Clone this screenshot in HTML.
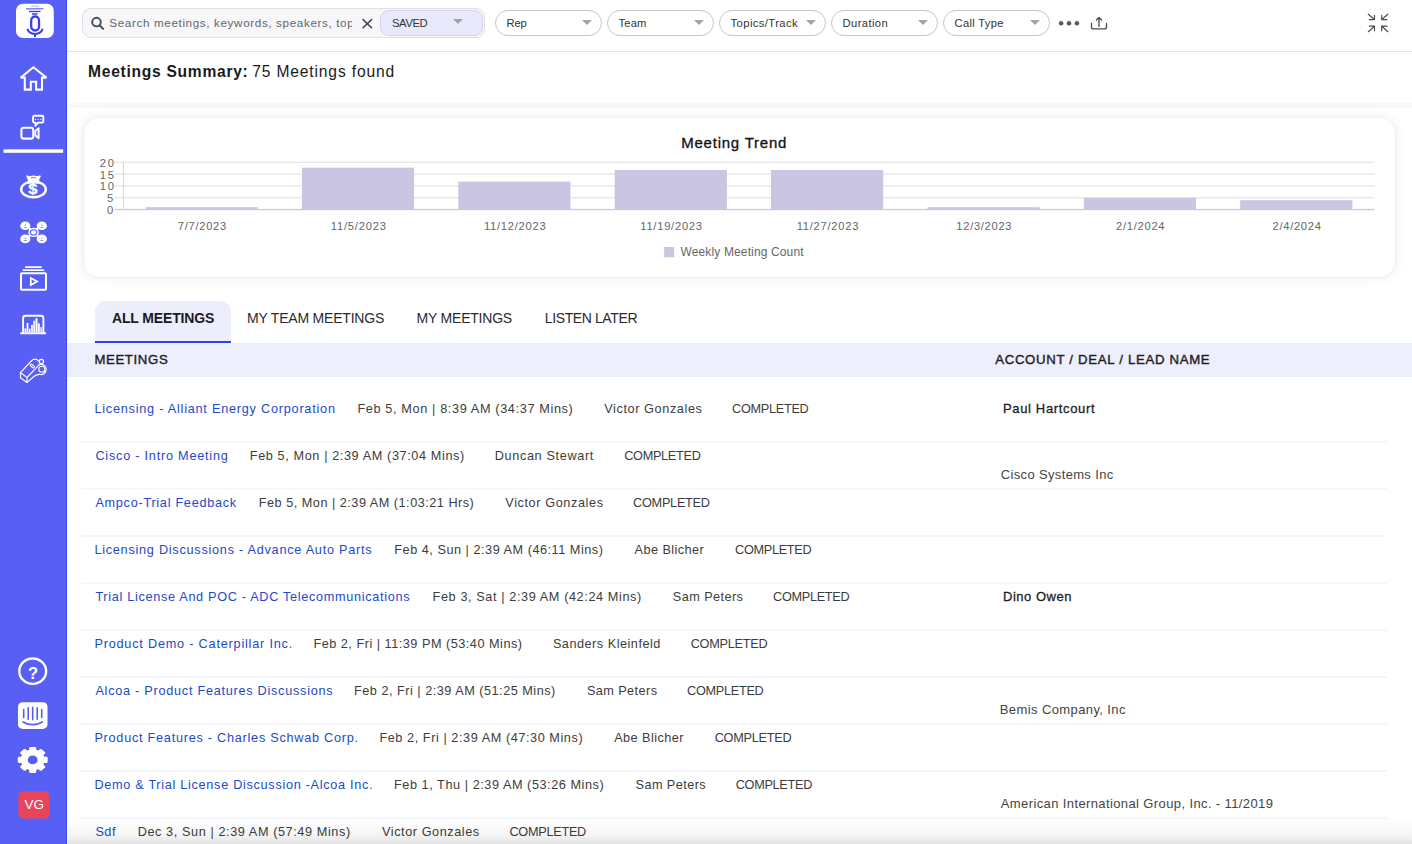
<!DOCTYPE html>
<html lang="en">
<head>
<meta charset="utf-8">
<title>Meetings</title>
<style>
*{box-sizing:border-box;margin:0;padding:0}
html,body{width:1412px;height:844px;overflow:hidden;background:#fff}
body{font-family:"Liberation Sans",Arial,sans-serif;color:#222;position:relative}
.abs{position:absolute}
#side{position:absolute;left:0;top:0;width:66.600px;height:844px;background:#585ff5;border-right:1.500px solid #3c46f7}
#top{position:absolute;left:66.500px;top:0;right:0;height:51.500px;border-bottom:1.500px solid #e6e6e8;background:#fff}
.t{position:absolute;white-space:nowrap;line-height:16px}
#search{position:absolute;left:82px;top:8px;width:402.500px;height:30px;border:1px solid #e0e0e4;border-radius:9px;background:#f7f7f9}
#saved{position:absolute;left:380px;top:10px;width:102.500px;height:25.500px;border:1px solid #d2d3ec;border-radius:9px;background:#e8e9fb}
.pill{position:absolute;top:10px;width:106.500px;height:26px;border:1px solid #c6c6ca;border-radius:13px;background:#fff}
.caret{position:absolute;width:0;height:0;border-left:5.100px solid transparent;border-right:5.100px solid transparent;border-top:5.700px solid #a1a1a9}
.sep{position:absolute;left:79px;width:1308px;height:2px;background:#f5f5fc}
#card{position:absolute;left:83.500px;top:117.500px;width:1311.500px;height:159px;border-radius:15px;background:#fff;box-shadow:0 0 0 1px rgba(0,0,0,.025),0 0 12px rgba(0,0,0,.085)}
#thead{position:absolute;left:66.500px;top:342.500px;width:1346px;height:34.500px;background:#eeeffd}
#tab{position:absolute;left:95px;top:301px;width:136px;height:41.500px;background:#eceefc;border-radius:11px 11px 0 0;border-bottom:2.800px solid #2c42ec}
</style>
</head>
<body>
<div id="side">
<svg width="67" height="844" viewBox="0 0 67 844" style="position:absolute;left:0;top:0" fill="none" stroke="#fff" stroke-width="2" stroke-linecap="round" stroke-linejoin="round">
<!-- logo -->
<rect x="16" y="3.800" width="37.800" height="34.200" rx="7" fill="#fff" stroke="none"/>
<g stroke="#3a3eee" stroke-width="1.300" stroke-linecap="butt">
<path d="M31 6.200H39" stroke-opacity=".3"/><path d="M26 8.800H43.500" stroke-opacity=".75"/><path d="M29 11.500H40.500"/><path d="M32 14H37.500" stroke-width="1.500"/>
<rect x="31.200" y="16.500" width="7.800" height="14" rx="3.900" stroke-width="2.300"/>
<path d="M27.600 28.800a7.400 5.200 0 0 0 14.800 0" stroke-width="2.100"/><path d="M35 34V36.900" stroke-width="2"/>
</g>
<!-- home -->
<path d="M20.700 77.600L33.400 67.300 46.400 77.600H42V89.600H36.100V81.800H30.800V89.600H24.800V77.600Z" stroke-width="2.050" stroke-linejoin="miter" stroke-miterlimit="2"/>
<!-- camera + chat -->
<rect x="21.400" y="127.800" width="11.900" height="10.800" rx="2.300" stroke-width="2.100"/>
<path d="M35.300 131.100L38.600 128.200v10l-3.300-2.900z" stroke-width="1.900"/>
<path d="M34.400 115.700h7.600a1.300 1.300 0 0 1 1.300 1.300v4.300a1.300 1.300 0 0 1-1.300 1.300h-4l-2.600 3.200v-3.200h-1a1.300 1.300 0 0 1-1.300-1.300v-4.300a1.300 1.300 0 0 1 1.300-1.300z" stroke-width="1.900"/>
<path d="M35.500 119.300h.1M38.100 119.300h.1M40.700 119.300h.1" stroke-width="1.300"/>
<!-- active underline -->
<rect x="3.500" y="149.300" width="59.600" height="3.500" fill="#fff" stroke="none"/>
<!-- money bag -->
<ellipse cx="33.500" cy="189.400" rx="12.300" ry="7.900" stroke-width="2.400"/>
<path d="M27.200 176.200c1.200.6 2.300.8 3.400.5 2-.6 3.800-.6 5.800 0 1.100.3 2.200.1 3.400-.5-.2.900-.8 2-1.500 3.200l.6 3.400h-10.800l.6-3.400c-.7-1.200-1.300-2.300-1.500-3.200z" fill="#fff" stroke-width="1.700"/>
<path d="M31.400 177.900c1.300-.5 2.900-.5 4.200 0" stroke="#585ff5" stroke-width="1" />
<!-- network -->
<g fill="#fff" stroke="none">
<ellipse cx="25.300" cy="225.700" rx="5.100" ry="4.300"/><ellipse cx="41.800" cy="225.700" rx="5.100" ry="4.300"/><ellipse cx="25.300" cy="238.900" rx="5.100" ry="4.300"/><ellipse cx="41.800" cy="238.900" rx="5.100" ry="4.300"/><ellipse cx="33.600" cy="232.400" rx="5.300" ry="4.600"/>
<path d="M28 227.500l3 2.400M39 227.500l-3 2.400M28 237.100l3-2.400M39 237.100l-3-2.400" stroke="#fff" stroke-width="2.200"/>
</g>
<g fill="#585ff5" stroke="none" opacity=".75">
<circle cx="25.300" cy="225.300" r=".7"/><ellipse cx="25.300" cy="227.500" rx="1.600" ry=".6"/>
<circle cx="41.800" cy="225.300" r=".7"/><ellipse cx="41.800" cy="227.500" rx="1.600" ry=".6"/>
<circle cx="25.300" cy="238.400" r=".7"/><ellipse cx="25.300" cy="240.600" rx="1.600" ry=".6"/>
<circle cx="41.800" cy="238.400" r=".7"/><ellipse cx="41.800" cy="240.600" rx="1.600" ry=".6"/>
</g>
<ellipse cx="33.600" cy="232.400" rx="3.200" ry="2.600" stroke="#585ff5" stroke-width="1.100"/><ellipse cx="33.600" cy="232.400" rx="1.500" ry="1.100" fill="#fff" stroke="none" opacity=".7"/>
<!-- video stack -->
<rect x="21" y="273.200" width="25" height="16.500" rx=".9" stroke-width="2"/>
<path d="M23.400 270.200H43.400M25.800 267.200H41" stroke-width="1.800"/>
<path d="M30.800 278.100l6.300 3.500-6.300 3.500z" stroke-width="1.700" stroke-linejoin="miter"/>
<!-- chart -->
<path d="M23.100 332.600V318.200a2.500 2.500 0 0 1 2.500-2.500h15.300a2.500 2.500 0 0 1 2.500 2.500v14.400" stroke-width="1.900"/>
<path d="M20.900 333.200H45.300" stroke-width="1.900"/>
<g fill="#fff" stroke="none">
<rect x="24.500" y="328.400" width="1.700" height="4"/><rect x="26.600" y="323" width="1.800" height="9.400"/><rect x="28.900" y="328.600" width="1.600" height="3.800"/><rect x="31" y="324.800" width="2" height="7.600" opacity=".85"/><rect x="33.200" y="320.700" width="1.900" height="11.700" opacity=".9"/><rect x="35.500" y="318.200" width="2" height="14.200"/><rect x="37.900" y="323.300" width="1.900" height="9.100"/><rect x="40.200" y="327.100" width="2" height="5.300" opacity=".75"/>
</g>
<!-- whistle -->
<g stroke-width="1.150">
<path d="M20.500 372.600L31.800 360.500C33.200 359.100 35.500 358.800 37.100 359.800L39.500 361.600"/>
<path d="M27 377.500L39 364.800"/>
<path d="M20.500 372.600L27 377.500V382.500L20.500 377.800Z"/>
<path d="M27 382.500L34.200 376.200C36 374.700 37.800 374.600 39.600 374.300"/>
<path d="M39 364.800A5.100 5.100 0 1 1 39.600 374.300"/>
<circle cx="41.800" cy="369.200" r="3"/>
<circle cx="41.300" cy="361.500" r="2.200"/>
<rect x="30.100" y="365.100" width="4.600" height="2" rx="1" transform="rotate(38 32.400 366.100)"/>
</g>
<!-- help -->
<ellipse cx="32.700" cy="671.200" rx="13.400" ry="12.700" stroke-width="2.400"/>
<!-- intercom -->
<rect x="18" y="702.200" width="29.500" height="26.700" rx="4.500" fill="#fff" stroke="none"/>
<g stroke="#585ff5" stroke-width="1.600" stroke-linecap="round"><path d="M23.700 709.500v8M28.200 707.700v11.500M32.700 707.200v12.500M37.200 707.700v11.500M41.700 709.500v8"/><path d="M23.200 722c5.500 3.600 13.500 3.600 19 0" stroke-width="1.700"/></g>
<!-- gear -->
<g transform="translate(32.700 759.900) scale(1.150 1)" fill="#fff" stroke="none">
<circle r="10.400"/>
<rect x="-3.100" y="-13" width="6.200" height="26" rx="1.200"/><rect x="-3.100" y="-13" width="6.200" height="26" rx="1.200" transform="rotate(45)"/><rect x="-3.100" y="-13" width="6.200" height="26" rx="1.200" transform="rotate(90)"/><rect x="-3.100" y="-13" width="6.200" height="26" rx="1.200" transform="rotate(135)"/>
<circle r="4.300" fill="#585ff5"/>
</g>
<!-- avatar -->
<rect x="18.400" y="791.200" width="31" height="27.400" rx="4.500" fill="#e8445a" stroke="none"/>
</svg>

<div class="t" style="left:29.200px;top:179.900px;font-size:14px;font-weight:bold;color:#fff;line-height:19px;-webkit-text-stroke:.3px #fff;transform:scaleX(1.180);transform-origin:50% 50%">$</div>
<div class="t" style="left:28px;top:661.500px;font-size:16.500px;font-weight:bold;color:#fff;line-height:22px">?</div>
<div class="t" style="left:24.60px;top:797.00px;font-size:13.5px;line-height:16px;color:#fff;letter-spacing:-0.204px;">VG</div>
</div>
<div id="top"></div>
<div id="search"></div>
<svg class="abs" style="left:88px;top:14px" width="20" height="20" viewBox="0 0 20 20" fill="none" stroke="#4a4a4e" stroke-width="1.900" stroke-linecap="round"><circle cx="8.500" cy="8.100" r="4.300"/><path d="M11.800 11.500l3.400 3.400"/></svg>
<div class="abs" style="left:100px;top:10px;width:251.500px;height:26px;overflow:hidden"><div class="t" style="left:9.30px;top:5.20px;font-size:11.7px;line-height:16px;color:#66666a;letter-spacing:0.620px;">Search meetings, keywords, speakers, topics</div></div>
<svg class="abs" style="left:361px;top:17px" width="13" height="13" viewBox="0 0 13 13" fill="none" stroke="#444448" stroke-width="1.500" stroke-linecap="round"><path d="M2 2.600l8.600 8.200M10.600 2.600L2 10.800"/></svg>
<div id="saved"><div class="caret" style="left:72.400px;top:8.200px"></div></div>
<div class="t" style="left:392.00px;top:15.20px;font-size:11.2px;line-height:16px;color:#333;letter-spacing:-0.354px;">SAVED</div>
<div class="pill" style="left:495px"><div class="caret" style="left:86.100px;top:9px"></div></div>
<div class="t" style="left:506.60px;top:15.20px;font-size:11.2px;line-height:16px;color:#333;letter-spacing:-0.251px;">Rep</div>
<div class="pill" style="left:607px"><div class="caret" style="left:86.100px;top:9px"></div></div>
<div class="t" style="left:618.60px;top:15.20px;font-size:11.2px;line-height:16px;color:#333;letter-spacing:0.121px;">Team</div>
<div class="pill" style="left:719px"><div class="caret" style="left:86.100px;top:9px"></div></div>
<div class="t" style="left:730.60px;top:15.20px;font-size:11.2px;line-height:16px;color:#333;letter-spacing:0.420px;">Topics/Track</div>
<div class="pill" style="left:831px"><div class="caret" style="left:86.100px;top:9px"></div></div>
<div class="t" style="left:842.60px;top:15.20px;font-size:11.2px;line-height:16px;color:#333;letter-spacing:0.405px;">Duration</div>
<div class="pill" style="left:943px"><div class="caret" style="left:86.100px;top:9px"></div></div>
<div class="t" style="left:954.60px;top:15.20px;font-size:11.2px;line-height:16px;color:#333;letter-spacing:0.311px;">Call Type</div>
<svg class="abs" style="left:1055px;top:10px" width="60" height="26" viewBox="0 0 60 26" fill="none" stroke="#4c4c52" stroke-width="1.300" stroke-linecap="round" stroke-linejoin="round">
<g fill="#5a5a60" stroke="none"><circle cx="6.100" cy="13.200" r="2.300"/><circle cx="14" cy="13.200" r="2.300"/><circle cx="21.900" cy="13.200" r="2.300"/></g>
<path d="M36.500 13.300v3.600a2 2 0 0 0 2 2h11a2 2 0 0 0 2-2v-3.600"/><path d="M44 16.400V7.700M41.400 10l2.600-2.500 2.600 2.500"/>
</svg>
<svg class="abs" style="left:1365px;top:11px" width="26" height="24" viewBox="0 0 26 24" fill="none" stroke="#4c4c52" stroke-width="1.150" stroke-linecap="round" stroke-linejoin="round">
<path d="M3.300 3.200l6.200 5.300M9.500 4.200v4.400H4.200M22.900 3.200l-6.200 5.300M16.700 4.200v4.400H22M3.300 20.700l6.200-5.500M4.200 15.100h5.300v4.600M22.900 20.700l-6.200-5.500M22 15.100h-5.300v4.600"/>
</svg>
<div class="t" style="left:88.10px;top:63.30px;font-size:15.6px;line-height:18px;color:#1a1a1a;letter-spacing:0.720px;font-weight:700;">Meetings Summary:</div>
<div class="t" style="left:252.20px;top:63.30px;font-size:15.6px;line-height:18px;color:#1a1a1a;letter-spacing:0.854px;">75 Meetings found</div>
<div class="abs" style="left:68px;top:103px;width:1344px;height:5px;background:#f8f8f8"></div>
<div id="card"></div>
<div class="t" style="left:681.20px;top:134.30px;font-size:15px;line-height:18px;color:#111;letter-spacing:0.774px;-webkit-text-stroke:.3px #111;">Meeting Trend</div>
<svg class="abs" style="left:83px;top:117px" width="1312" height="160" viewBox="83 117 1312 160"><rect x="114.500" y="161.7" width="1260" height="1.200" fill="#e4e4e4"/><rect x="114.500" y="173.5" width="1260" height="1.200" fill="#e4e4e4"/><rect x="114.500" y="185.3" width="1260" height="1.200" fill="#e4e4e4"/><rect x="114.500" y="197.1" width="1260" height="1.200" fill="#e4e4e4"/><rect x="114.500" y="208.900" width="1260" height="1.300" fill="#cbcbcb"/><rect x="122.900" y="162" width="1.100" height="47.500" fill="#dadada"/><rect x="145.5" y="207.2" width="112.2" height="2.3" fill="#c9c5e2"/><rect x="301.9" y="167.7" width="112.2" height="41.8" fill="#c9c5e2"/><rect x="458.3" y="181.6" width="112.2" height="27.9" fill="#c9c5e2"/><rect x="614.7" y="170.0" width="112.2" height="39.5" fill="#c9c5e2"/><rect x="771.0" y="170.0" width="112.2" height="39.5" fill="#c9c5e2"/><rect x="927.4" y="207.2" width="112.2" height="2.3" fill="#c9c5e2"/><rect x="1083.8" y="197.9" width="112.2" height="11.6" fill="#c9c5e2"/><rect x="1240.2" y="200.2" width="112.2" height="9.3" fill="#c9c5e2"/><rect x="664.200" y="247" width="10" height="10.300" fill="#c9c5e2"/></svg>
<div class="t" style="left:99.70px;top:154.80px;font-size:11.2px;line-height:16px;color:#666;letter-spacing:1.778px;">20</div>
<div class="t" style="left:99.70px;top:166.50px;font-size:11.2px;line-height:16px;color:#666;letter-spacing:1.778px;">15</div>
<div class="t" style="left:99.70px;top:178.20px;font-size:11.2px;line-height:16px;color:#666;letter-spacing:1.778px;">10</div>
<div class="t" style="left:107.10px;top:189.90px;font-size:11.2px;line-height:16px;color:#666;letter-spacing:0.000px;">5</div>
<div class="t" style="left:107.10px;top:201.60px;font-size:11.2px;line-height:16px;color:#666;letter-spacing:0.000px;">0</div>
<div class="t" style="left:177.79px;top:217.50px;font-size:11.2px;line-height:16px;color:#666;letter-spacing:0.696px;">7/7/2023</div>
<div class="t" style="left:330.78px;top:217.50px;font-size:11.2px;line-height:16px;color:#666;letter-spacing:0.785px;">11/5/2023</div>
<div class="t" style="left:483.92px;top:217.50px;font-size:11.2px;line-height:16px;color:#666;letter-spacing:0.729px;">11/12/2023</div>
<div class="t" style="left:640.31px;top:217.50px;font-size:11.2px;line-height:16px;color:#666;letter-spacing:0.729px;">11/19/2023</div>
<div class="t" style="left:796.69px;top:217.50px;font-size:11.2px;line-height:16px;color:#666;letter-spacing:0.729px;">11/27/2023</div>
<div class="t" style="left:956.33px;top:217.50px;font-size:11.2px;line-height:16px;color:#666;letter-spacing:0.681px;">12/3/2023</div>
<div class="t" style="left:1116.12px;top:217.50px;font-size:11.2px;line-height:16px;color:#666;letter-spacing:0.696px;">2/1/2024</div>
<div class="t" style="left:1272.51px;top:217.50px;font-size:11.2px;line-height:16px;color:#666;letter-spacing:0.696px;">2/4/2024</div>
<div class="t" style="left:680.50px;top:244.10px;font-size:12px;line-height:16px;color:#666;letter-spacing:0.133px;">Weekly Meeting Count</div>
<div id="tab"></div><div id="thead"></div>
<div class="t" style="left:112.00px;top:310.30px;font-size:14px;line-height:16px;color:#1a1a1e;letter-spacing:-0.144px;font-weight:700;">ALL MEETINGS</div>
<div class="t" style="left:247.10px;top:310.30px;font-size:14px;line-height:16px;color:#2a2a2e;letter-spacing:-0.210px;">MY TEAM MEETINGS</div>
<div class="t" style="left:416.60px;top:310.30px;font-size:14px;line-height:16px;color:#2a2a2e;letter-spacing:-0.217px;">MY MEETINGS</div>
<div class="t" style="left:544.80px;top:310.30px;font-size:14px;line-height:16px;color:#2a2a2e;letter-spacing:-0.389px;">LISTEN LATER</div>
<div class="t" style="left:94.40px;top:352.30px;font-size:13.2px;line-height:16px;color:#1e1e28;letter-spacing:0.632px;-webkit-text-stroke:.4px #1e1e28;">MEETINGS</div>
<div class="t" style="left:995.20px;top:352.30px;font-size:13.2px;line-height:16px;color:#1e1e28;letter-spacing:0.694px;-webkit-text-stroke:.4px #1e1e28;">ACCOUNT / DEAL / LEAD NAME</div>
<div class="t" style="left:94.40px;top:401.40px;font-size:12.7px;line-height:16px;color:#1c4ac8;letter-spacing:0.764px;">Licensing - Alliant Energy Corporation</div>
<div class="t" style="left:357.40px;top:401.40px;font-size:12.7px;line-height:16px;color:#3c3c3c;letter-spacing:0.635px;">Feb 5, Mon | 8:39 AM (34:37 Mins)</div>
<div class="t" style="left:604.20px;top:401.40px;font-size:12.7px;line-height:16px;color:#3c3c3c;letter-spacing:0.601px;">Victor Gonzales</div>
<div class="t" style="left:732.00px;top:401.40px;font-size:12.7px;line-height:16px;color:#3c3c3c;letter-spacing:-0.274px;">COMPLETED</div>
<div class="t" style="left:1003.00px;top:401.40px;font-size:13px;line-height:16px;color:#1c1c1c;letter-spacing:0.648px;-webkit-text-stroke:.28px #1c1c1c;">Paul Hartcourt</div>
<div class="sep" style="top:441.0px"></div>
<div class="t" style="left:95.40px;top:448.40px;font-size:12.7px;line-height:16px;color:#1c4ac8;letter-spacing:0.770px;">Cisco - Intro Meeting</div>
<div class="t" style="left:249.80px;top:448.40px;font-size:12.7px;line-height:16px;color:#3c3c3c;letter-spacing:0.604px;">Feb 5, Mon | 2:39 AM (37:04 Mins)</div>
<div class="t" style="left:494.70px;top:448.40px;font-size:12.7px;line-height:16px;color:#3c3c3c;letter-spacing:0.643px;">Duncan Stewart</div>
<div class="t" style="left:624.20px;top:448.40px;font-size:12.7px;line-height:16px;color:#3c3c3c;letter-spacing:-0.287px;">COMPLETED</div>
<div class="t" style="left:1000.80px;top:466.90px;font-size:13px;line-height:16px;color:#444;letter-spacing:0.343px;">Cisco Systems Inc</div>
<div class="sep" style="top:488.0px"></div>
<div class="t" style="left:95.40px;top:495.40px;font-size:12.7px;line-height:16px;color:#1c4ac8;letter-spacing:0.715px;">Ampco-Trial Feedback</div>
<div class="t" style="left:258.80px;top:495.40px;font-size:12.7px;line-height:16px;color:#3c3c3c;letter-spacing:0.497px;">Feb 5, Mon | 2:39 AM (1:03:21 Hrs)</div>
<div class="t" style="left:505.30px;top:495.40px;font-size:12.7px;line-height:16px;color:#3c3c3c;letter-spacing:0.601px;">Victor Gonzales</div>
<div class="t" style="left:633.10px;top:495.40px;font-size:12.7px;line-height:16px;color:#3c3c3c;letter-spacing:-0.262px;">COMPLETED</div>
<div class="sep" style="top:535.0px"></div>
<div class="t" style="left:94.40px;top:542.40px;font-size:12.7px;line-height:16px;color:#1c4ac8;letter-spacing:0.739px;">Licensing Discussions - Advance Auto Parts</div>
<div class="t" style="left:394.30px;top:542.40px;font-size:12.7px;line-height:16px;color:#3c3c3c;letter-spacing:0.518px;">Feb 4, Sun | 2:39 AM (46:11 Mins)</div>
<div class="t" style="left:634.50px;top:542.40px;font-size:12.7px;line-height:16px;color:#3c3c3c;letter-spacing:0.444px;">Abe Blicher</div>
<div class="t" style="left:735.00px;top:542.40px;font-size:12.7px;line-height:16px;color:#3c3c3c;letter-spacing:-0.287px;">COMPLETED</div>
<div class="sep" style="top:582.0px"></div>
<div class="t" style="left:95.40px;top:589.40px;font-size:12.7px;line-height:16px;color:#1c4ac8;letter-spacing:0.683px;">Trial License And POC - ADC Telecommunications</div>
<div class="t" style="left:432.60px;top:589.40px;font-size:12.7px;line-height:16px;color:#3c3c3c;letter-spacing:0.599px;">Feb 3, Sat | 2:39 AM (42:24 Mins)</div>
<div class="t" style="left:672.80px;top:589.40px;font-size:12.7px;line-height:16px;color:#3c3c3c;letter-spacing:0.429px;">Sam Peters</div>
<div class="t" style="left:773.00px;top:589.40px;font-size:12.7px;line-height:16px;color:#3c3c3c;letter-spacing:-0.287px;">COMPLETED</div>
<div class="t" style="left:1003.00px;top:589.40px;font-size:13px;line-height:16px;color:#1c1c1c;letter-spacing:0.515px;-webkit-text-stroke:.28px #1c1c1c;">Dino Owen</div>
<div class="sep" style="top:629.0px"></div>
<div class="t" style="left:94.40px;top:636.40px;font-size:12.7px;line-height:16px;color:#1c4ac8;letter-spacing:0.789px;">Product Demo - Caterpillar Inc.</div>
<div class="t" style="left:313.40px;top:636.40px;font-size:12.7px;line-height:16px;color:#3c3c3c;letter-spacing:0.503px;">Feb 2, Fri | 11:39 PM (53:40 Mins)</div>
<div class="t" style="left:552.90px;top:636.40px;font-size:12.7px;line-height:16px;color:#3c3c3c;letter-spacing:0.500px;">Sanders Kleinfeld</div>
<div class="t" style="left:690.70px;top:636.40px;font-size:12.7px;line-height:16px;color:#3c3c3c;letter-spacing:-0.262px;">COMPLETED</div>
<div class="sep" style="top:676.0px"></div>
<div class="t" style="left:95.40px;top:683.40px;font-size:12.7px;line-height:16px;color:#1c4ac8;letter-spacing:0.734px;">Alcoa - Product Features Discussions</div>
<div class="t" style="left:354.00px;top:683.40px;font-size:12.7px;line-height:16px;color:#3c3c3c;letter-spacing:0.503px;">Feb 2, Fri | 2:39 AM (51:25 Mins)</div>
<div class="t" style="left:586.90px;top:683.40px;font-size:12.7px;line-height:16px;color:#3c3c3c;letter-spacing:0.429px;">Sam Peters</div>
<div class="t" style="left:687.10px;top:683.40px;font-size:12.7px;line-height:16px;color:#3c3c3c;letter-spacing:-0.287px;">COMPLETED</div>
<div class="t" style="left:999.80px;top:701.90px;font-size:13px;line-height:16px;color:#444;letter-spacing:0.396px;">Bemis Company, Inc</div>
<div class="sep" style="top:723.0px"></div>
<div class="t" style="left:94.40px;top:730.40px;font-size:12.7px;line-height:16px;color:#1c4ac8;letter-spacing:0.742px;">Product Features - Charles Schwab Corp.</div>
<div class="t" style="left:379.40px;top:730.40px;font-size:12.7px;line-height:16px;color:#3c3c3c;letter-spacing:0.563px;">Feb 2, Fri | 2:39 AM (47:30 Mins)</div>
<div class="t" style="left:614.20px;top:730.40px;font-size:12.7px;line-height:16px;color:#3c3c3c;letter-spacing:0.444px;">Abe Blicher</div>
<div class="t" style="left:714.70px;top:730.40px;font-size:12.7px;line-height:16px;color:#3c3c3c;letter-spacing:-0.262px;">COMPLETED</div>
<div class="sep" style="top:770.0px"></div>
<div class="t" style="left:94.40px;top:777.40px;font-size:12.7px;line-height:16px;color:#1c4ac8;letter-spacing:0.697px;">Demo &amp; Trial License Discussion -Alcoa Inc.</div>
<div class="t" style="left:394.00px;top:777.40px;font-size:12.7px;line-height:16px;color:#3c3c3c;letter-spacing:0.551px;">Feb 1, Thu | 2:39 AM (53:26 Mins)</div>
<div class="t" style="left:635.50px;top:777.40px;font-size:12.7px;line-height:16px;color:#3c3c3c;letter-spacing:0.429px;">Sam Peters</div>
<div class="t" style="left:735.70px;top:777.40px;font-size:12.7px;line-height:16px;color:#3c3c3c;letter-spacing:-0.287px;">COMPLETED</div>
<div class="t" style="left:1000.80px;top:795.90px;font-size:13px;line-height:16px;color:#444;letter-spacing:0.385px;">American International Group, Inc. - 11/2019</div>
<div class="sep" style="top:817.0px"></div>
<div class="t" style="left:95.40px;top:824.40px;font-size:12.7px;line-height:16px;color:#1c4ac8;letter-spacing:0.491px;">Sdf</div>
<div class="t" style="left:137.70px;top:824.40px;font-size:12.7px;line-height:16px;color:#3c3c3c;letter-spacing:0.585px;">Dec 3, Sun | 2:39 AM (57:49 Mins)</div>
<div class="t" style="left:382.00px;top:824.40px;font-size:12.7px;line-height:16px;color:#3c3c3c;letter-spacing:0.558px;">Victor Gonzales</div>
<div class="t" style="left:509.40px;top:824.40px;font-size:12.7px;line-height:16px;color:#3c3c3c;letter-spacing:-0.262px;">COMPLETED</div>
<div class="abs" style="left:68px;top:814px;width:1344px;height:30px;background:linear-gradient(to bottom,rgba(0,0,0,0),rgba(0,0,0,.015) 40%,rgba(0,0,0,.045) 70%,rgba(0,0,0,.11))"></div>
</body>
</html>
